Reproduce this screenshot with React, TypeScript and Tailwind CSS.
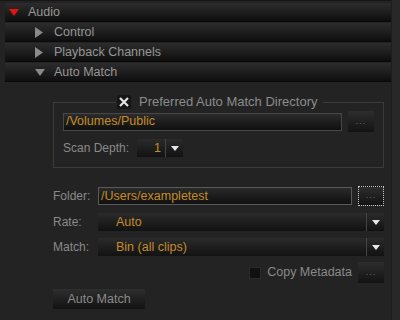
import React from 'react';

const font = { fontFamily: '"Liberation Sans", Arial, sans-serif' };

function DownTri({ className }: { className: string }) {
  return (
    <svg width="10" height="7" viewBox="0 0 10 7" className={className}>
      <path d="M0 0 H10 L5 7 Z" fill="currentColor" />
    </svg>
  );
}

function RightTri() {
  return (
    <svg width="8" height="11" viewBox="0 0 8 11" className="text-[#8a8a8a]">
      <path d="M0 0 L8 5.5 L0 11 Z" fill="currentColor" />
    </svg>
  );
}

function Header({ label, level, open, red }: { label: string; level: number; open: boolean; red?: boolean }) {
  return (
    <div className="h-[19px] flex items-center bg-linear-to-b from-[#2c2c2c] via-[#1e1e1e] to-[#0e0e0e] border-b border-[#0a0a0a]">
      <div className={level === 0 ? 'w-[23px] pl-[4px] flex' : 'w-[49px] pl-[30px] flex'}>
        {open ? <DownTri className={red ? 'text-[#e3140f]' : 'text-[#8a8a8a]'} /> : <RightTri />}
      </div>
      <span className="text-[12.5px] text-[#969696]">{label}</span>
    </div>
  );
}

function Dots() {
  return (
    <div className="h-[21px] w-[26px] flex items-center justify-center bg-linear-to-b from-[#2e2e2e] to-[#131313] text-[9px] text-[#6a6a6a] tracking-[1px]">
      ...
    </div>
  );
}

function DropArrow() {
  return (
    <div className="w-[18px] h-full flex items-center justify-center border-l border-[#444]">
      <svg width="8" height="5" viewBox="0 0 8 5">
        <path d="M0 0 H8 L4 5 Z" fill="#e6e6e6" />
      </svg>
    </div>
  );
}

function Dropdown({ value }: { value: string }) {
  return (
    <div className="flex-1 h-[18px] flex items-center bg-linear-to-b from-[#2b2b2b] to-[#121212]">
      <span className="flex-1 pl-[18px] text-[12.5px] text-[#c48c28]">{value}</span>
      <DropArrow />
    </div>
  );
}

export default function App() {
  return (
    <div className="w-[400px] h-[320px] flex bg-[#232323] overflow-hidden" style={font}>
      <div className="w-[391px] flex flex-col pt-[2px] pl-[5px] border-t border-[#161616]">
        <div className="flex flex-col gap-[1px]">
          <Header label="Audio" level={0} open red />
          <Header label="Control" level={1} open={false} />
          <Header label="Playback Channels" level={1} open={false} />
          <Header label="Auto Match" level={1} open />
        </div>

        <div className="pl-[48px] pr-[7px] pt-[12px] flex flex-col">
          <fieldset className="border border-[#3b3b3b] px-[9px] pb-[10px]">
            <legend className="ml-[53px] px-[1px] flex items-center gap-[8px] h-[16px]">
              <span className="w-[14px] h-[14px] bg-[#161616] flex items-center justify-center">
                <svg width="10" height="10" viewBox="0 0 10 10">
                  <path d="M1 1 L9 9 M9 1 L1 9" stroke="#e2e2e2" strokeWidth="2.2" />
                </svg>
              </span>
              <span className="text-[13px] text-[#8c8c8c] pr-[5px]">Preferred Auto Match Directory</span>
            </legend>
            <div className="flex items-center gap-[6px] mt-[1px]">
              <div className="flex-1 h-[18px] flex items-center border border-[#474747] bg-linear-to-b from-[#2c2c2c] to-[#0f0f0f] pl-[2px]">
                <span className="text-[12.5px] text-[#c48c28]">/Volumes/Public</span>
              </div>
              <Dots />
            </div>
            <div className="flex items-center mt-[7px]">
              <span className="w-[74px] text-[12px] text-[#8a8a8a]">Scan Depth:</span>
              <div className="h-[18px] flex items-center bg-linear-to-b from-[#2b2b2b] to-[#121212]">
                <span className="w-[28px] text-right pr-[4px] text-[12.5px] text-[#c48c28]">1</span>
                <DropArrow />
              </div>
            </div>
          </fieldset>

          <div className="flex items-center mt-[18px] h-[20px]">
            <span className="w-[45px] text-[12px] text-[#8a8a8a]">Folder:</span>
            <div className="flex-1 h-[18px] flex items-center border border-[#5a5a5a] bg-linear-to-b from-[#2a2a2a] to-[#101010] pl-[2px]">
              <span className="text-[12.5px] text-[#c48c28]">/Users/exampletest</span>
            </div>
            <div className="ml-[6px] h-[20px] w-[26px] flex items-center justify-center border border-dotted border-[#c8c8c8] bg-linear-to-b from-[#2e2e2e] to-[#131313] text-[9px] text-[#6a6a6a] tracking-[1px]">
              ...
            </div>
          </div>

          <div className="flex items-center mt-[7px]">
            <span className="w-[45px] text-[12px] text-[#8a8a8a]">Rate:</span>
            <Dropdown value="Auto" />
          </div>
          <div className="flex items-center mt-[7px]">
            <span className="w-[45px] text-[12px] text-[#8a8a8a]">Match:</span>
            <Dropdown value="Bin (all clips)" />
          </div>

          <div className="flex items-center justify-end mt-[6px]">
            <span className="w-[12px] h-[12px] bg-[#111] border border-[#2a2a2a]" />
            <span className="ml-[6px] mr-[6px] text-[12.5px] text-[#8a8a8a]">Copy Metadata</span>
            <Dots />
          </div>

          <div className="mt-[6px]">
            <div className="w-[92px] h-[20px] flex items-center justify-center bg-linear-to-b from-[#2e2e2e] to-[#131313] text-[12.5px] text-[#8a8a8a]">
              Auto Match
            </div>
          </div>
        </div>
      </div>
      <div className="w-[9px] bg-[#282828] border-l border-[#1d1d1d]" />
    </div>
  );
}
